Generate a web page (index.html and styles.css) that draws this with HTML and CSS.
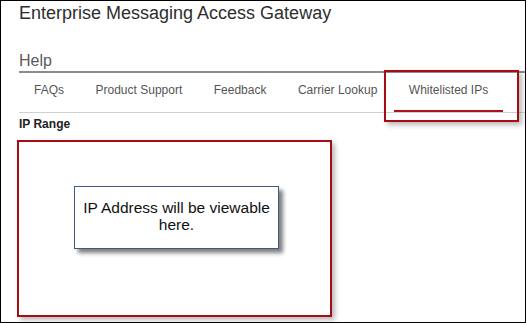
FILE: index.html
```html
<!DOCTYPE html>
<html>
<head>
<meta charset="utf-8">
<link rel="stylesheet" href="styles.css">
</head>
<body>
<div class="frame">
  <div class="content">
    <h1 class="title">Enterprise Messaging Access Gateway</h1>
    <h2 class="help">Help</h2>
    <nav class="tabs">
      <span class="tab">FAQs</span>
      <span class="tab">Product Support</span>
      <span class="tab">Feedback</span>
      <span class="tab">Carrier Lookup</span>
      <span class="tab active">Whitelisted IPs</span>
    </nav>
    <div class="section-label">IP Range</div>
    <div class="panel">
      <div class="callout">IP Address will be viewable here.</div>
    </div>
  </div>
  <div class="annot-tab"></div>
</div>
</body>
</html>
```
FILE: styles.css
```css
html, body {
  margin: 0;
  padding: 0;
  background: #fff;
}
.frame {
  position: relative;
  box-sizing: border-box;
  width: 526px;
  height: 323px;
  border: 1px solid #000;
  overflow: hidden;
  font-family: "Liberation Sans", Arial, sans-serif;
}
.content {
  padding-left: 18px;
  padding-top: 1px;
}
.title {
  margin: 0;
  font-size: 18px;
  line-height: 22px;
  font-weight: normal;
  color: #2e2e2e;
}
.help {
  margin: 27px 0 0 0;
  font-size: 16px;
  line-height: 20px;
  font-weight: normal;
  color: #5a5a5a;
  border-bottom: 2px solid #8c8c8c;
}
.tabs {
  display: flex;
  border-bottom: 1px solid #d0d0d0;
}
.tab {
  padding: 10px 15px 13px 15px;
  font-size: 12px;
  line-height: 14px;
  color: #555;
  border-bottom: 2px solid transparent;
  margin-right: 1.5px;
}
.tab.active {
  border-bottom-color: #b31118;
}
.section-label {
  margin-top: 4px;
  font-size: 12px;
  line-height: 14px;
  font-weight: bold;
  color: #222;
}
.panel {
  margin-top: 9px;
  margin-left: -2px;
  box-sizing: border-box;
  width: 315px;
  height: 177px;
  border: 2px solid #a50d14;
  box-shadow: 3px 3px 5px rgba(0, 0, 0, 0.28);
  padding: 44px 0 0 55px;
}
.callout {
  box-sizing: border-box;
  width: 205px;
  height: 63px;
  border: 1px solid #3d5a80;
  box-shadow: 4px 4px 4px rgba(0, 0, 0, 0.5);
  padding: 12px 6px 0 6px;
  text-align: center;
  font-size: 15.5px;
  line-height: 17px;
  color: #111;
  background: #fff;
}
.annot-tab {
  position: absolute;
  left: 383px;
  top: 69px;
  box-sizing: border-box;
  width: 135px;
  height: 52px;
  border: 2px solid #a50d14;
  box-shadow: 3px 3px 5px rgba(0, 0, 0, 0.28);
}
```
